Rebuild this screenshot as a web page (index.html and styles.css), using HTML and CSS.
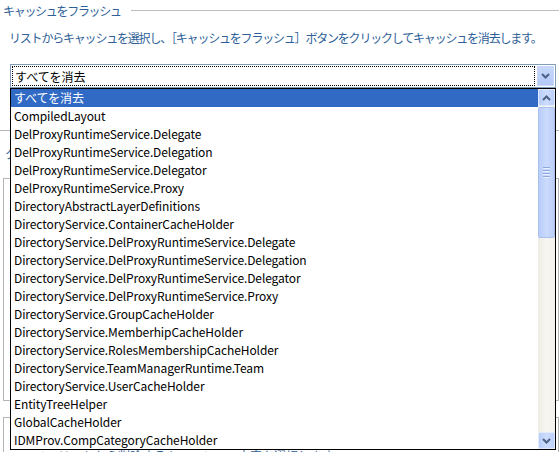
FILE: index.html
```html
<!DOCTYPE html>
<html lang="ja">
<head>
<meta charset="utf-8">
<link rel="stylesheet" href="styles.css">
</head>
<body>
<div class="page">
  <div class="legend"><span class="legend-title">キャッシュをフラッシュ</span><span class="legend-line"></span></div>
  <p class="desc">リストからキャッシュを選択し、［キャッシュをフラッシュ］ボタンをクリックしてキャッシュを消去します。</p>
  <div class="select">
    <div class="select-value"><span>すべてを消去</span></div>
    <div class="select-btn"><svg width="9" height="6" viewBox="0 0 9 6"><path d="M1 1 L4.5 4.5 L8 1" fill="none" stroke="#4d6185" stroke-width="2"/></svg></div>
  </div>
  <div class="behind">
    <div class="rule rule-a"></div>
    <div class="link-row">ク</div>
    <div class="box box-a"></div>
    <div class="box box-b"><div class="box-text">このリストから削除するキャッシュの内容を選択します。</div></div>
  </div>

  <div class="dropdown">
    <ul class="options">
      <li class="selected">すべてを消去</li>
      <li>CompiledLayout</li>
      <li>DelProxyRuntimeService.Delegate</li>
      <li>DelProxyRuntimeService.Delegation</li>
      <li>DelProxyRuntimeService.Delegator</li>
      <li>DelProxyRuntimeService.Proxy</li>
      <li>DirectoryAbstractLayerDefinitions</li>
      <li>DirectoryService.ContainerCacheHolder</li>
      <li>DirectoryService.DelProxyRuntimeService.Delegate</li>
      <li>DirectoryService.DelProxyRuntimeService.Delegation</li>
      <li>DirectoryService.DelProxyRuntimeService.Delegator</li>
      <li>DirectoryService.DelProxyRuntimeService.Proxy</li>
      <li>DirectoryService.GroupCacheHolder</li>
      <li>DirectoryService.MemberhipCacheHolder</li>
      <li>DirectoryService.RolesMembershipCacheHolder</li>
      <li>DirectoryService.TeamManagerRuntime.Team</li>
      <li>DirectoryService.UserCacheHolder</li>
      <li>EntityTreeHelper</li>
      <li>GlobalCacheHolder</li>
      <li>IDMProv.CompCategoryCacheHolder</li>
    </ul>
    <div class="scrollbar">
      <div class="sb-btn"><svg width="9" height="6" viewBox="0 0 9 6"><path d="M1 5 L4.5 1.5 L8 5" fill="none" stroke="#4d6185" stroke-width="2"/></svg></div>
      <div class="sb-thumb"><span class="grip"></span><span class="grip"></span><span class="grip"></span><span class="grip"></span></div>
      <div class="sb-track"></div>
      <div class="sb-btn"><svg width="9" height="6" viewBox="0 0 9 6"><path d="M1 1 L4.5 4.5 L8 1" fill="none" stroke="#4d6185" stroke-width="2"/></svg></div>
    </div>
  </div>
</div>
</body>
</html>
```
FILE: styles.css
```css
html, body {
  margin: 0;
  padding: 0;
  background: #ffffff;
}
body {
  font-family: "Noto Sans CJK JP", "Liberation Sans", sans-serif;
  font-size: 12px;
  width: 559px;
  height: 452px;
  overflow: hidden;
}
.page {
  position: relative;
  height: 452px;
  overflow: hidden;
}
.legend {
  display: flex;
  align-items: center;
  height: 20px;
  padding-left: 3px;
}
.legend-title {
  color: #2f5f98;
  font-size: 12px;
  letter-spacing: -1.3px;
}
.legend-line {
  flex: 1;
  height: 1px;
  margin-left: 10px;
  background: #bdbdbd;
}
.desc {
  margin: 10px 0 0 9px;
  height: 16px;
  line-height: 16px;
  color: #2f5f98;
  letter-spacing: -1.2px;
  white-space: nowrap;
}
.select {
  display: flex;
  margin: 18px 0 0 10px;
  width: 546px;
  height: 24px;
  box-sizing: border-box;
  border: 1px solid #7f9db9;
  padding: 1px;
  gap: 2px;
}
.select-value {
  flex: 1;
  border: 1px dotted #000;
  display: flex;
  align-items: center;
  padding-left: 2px;
  font-size: 12px;
  color: #000;
}
.select-btn {
  width: 17px;
  display: flex;
  align-items: center;
  justify-content: center;
  background: linear-gradient(#c8d8fc, #b4c9f8);
  border: 1px solid #c9d8f9;
  box-sizing: border-box;
}
.behind {
  position: relative;
  height: 364px;
  overflow: hidden;
}
.rule-a {
  margin-top: 42px;
  height: 1px;
  background: #b5b5b5;
}
.link-row {
  margin: 14px 0 0 5px;
  color: #2f5f98;
  height: 18px;
  line-height: 18px;
}
.box {
  margin-left: 3px;
  border: 1px solid #b5b5b5;
}
.box-a {
  margin-top: 15px;
  height: 221px;
}
.box-b {
  margin-top: 16px;
  height: 60px;
}
.box-text {
  padding: 29px 0 0 30px;
  color: #2f5f98;
  white-space: nowrap;
}
.dropdown {
  position: absolute;
  left: 10px;
  top: 88px;
  width: 546px;
  height: 362px;
  box-sizing: border-box;
  border: 1px solid #000;
  background: #fff;
  display: flex;
}
.options {
  list-style: none;
  margin: 0;
  padding: 0;
  flex: 1;
  overflow: hidden;
}
.options li {
  height: 18px;
  line-height: 18px;
  padding-left: 3px;
  color: #000;
  white-space: nowrap;
  letter-spacing: -0.1px;
}
.options li.selected {
  background: #316ac5;
  color: #fff;
}
.scrollbar {
  width: 17px;
  display: flex;
  flex-direction: column;
  background: linear-gradient(90deg, #eeede5, #f7f6f2 50%, #f3f1ea);
}
.sb-btn {
  height: 17px;
  display: flex;
  align-items: center;
  justify-content: center;
  background: linear-gradient(90deg, #b9cdf8, #cddcfd 50%, #bccff9);
  border: 1px solid #e1e9fc;
  box-sizing: border-box;
  border-radius: 2px;
}
.sb-thumb {
  height: 131px;
  margin-top: 1px;
  box-sizing: border-box;
  border: 1px solid #a9bff0;
  border-radius: 2px;
  background: linear-gradient(90deg, #b9cdf8, #cbdafd 50%, #bccff9);
  display: flex;
  flex-direction: column;
  align-items: center;
  justify-content: center;
  gap: 1px;
}
.grip {
  width: 7px;
  height: 1px;
  background: #8fa8e0;
  border-bottom: 1px solid #e8effd;
}
.sb-track {
  flex: 1;
}
```
